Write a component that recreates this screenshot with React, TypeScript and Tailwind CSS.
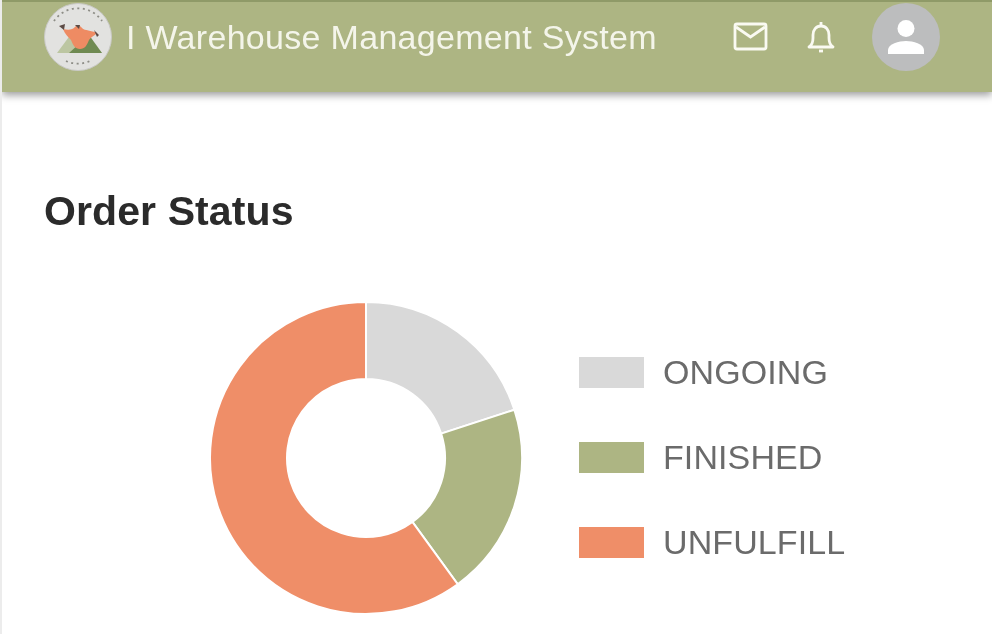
export default function App() {
  const cx = 160, cy = 160, R = 156, r = 79;
  const pt = (a: number, rad: number) => {
    const t = (a * Math.PI) / 180;
    return `${(cx + rad * Math.sin(t)).toFixed(2)} ${(cy - rad * Math.cos(t)).toFixed(2)}`;
  };
  const seg = (a: number, b: number) => {
    const large = b - a > 180 ? 1 : 0;
    return `M${pt(a, R)}A${R} ${R} 0 ${large} 1 ${pt(b, R)}L${pt(b, r)}A${r} ${r} 0 ${large} 0 ${pt(a, r)}Z`;
  };
  const legend = [
    { label: "ONGOING", color: "bg-[#d9d9d9]" },
    { label: "FINISHED", color: "bg-[#adb583]" },
    { label: "UNFULFILL", color: "bg-[#ef8e68]" },
  ];
  return (
    <div className="w-[992px] h-[634px] overflow-hidden bg-white flex flex-col border-l-2 border-l-[#ececec] font-['Liberation_Sans',Arial,sans-serif] blur-[0.5px]">
      <header className="h-[92px] shrink-0 bg-[#adb583] border-t-2 border-t-[#8f9a68] shadow-[0_3px_8px_rgba(0,0,0,0.4)] flex items-center pl-[42px] pr-[52px] pb-[20px] relative">
        <svg width="68" height="68" viewBox="0 0 68 68" className="shrink-0">
          <circle cx="34" cy="34" r="33.5" fill="#e2e2e0" stroke="#c9c9c6" />
          <path d="M10 18A29 29 0 0 1 58 18" fill="none" stroke="#8d8d86" strokeWidth="1.8" strokeDasharray="2 3.5" />
          <path d="M22 58A29 29 0 0 0 46 58" fill="none" stroke="#8d8d86" strokeWidth="1.8" strokeDasharray="2 3.5" />
          <path d="M13 50 33 23 58 50Z" fill="#bcc6a2" />
          <path d="M25 50 45 32 58 50Z" fill="#6f8a52" />
          <path d="M19 26c5 1 8 1 11-1 2-3 6-3 8 0 3 3 9 2 15 5-3 3-6 4-8 7-2 5-4 9-9 9-5 0-7-4-9-9-3-3-6-6-8-11Z" fill="#ee8b63" />
          <path d="M15 23 21 21 20 27ZM31 22 36 22 35 26ZM50 27 55 32 53 34Z" fill="#5b4a44" />
        </svg>
        <div className="ml-[14px] text-[34px] leading-none text-[#f4f5ea] tracking-[0.3px] whitespace-nowrap">I Warehouse Management System</div>
        <svg width="36" height="30" viewBox="0 0 36 30" fill="none" stroke="#fafaf2" strokeWidth="2.8" className="ml-auto shrink-0">
          <rect x="2" y="2" width="31" height="25" rx="2" />
          <path d="M3 5 17.5 15 32 5" />
        </svg>
        <svg width="30" height="36" viewBox="0 0 30 36" fill="none" stroke="#fafaf2" strokeWidth="2.8" className="ml-[37px] shrink-0">
          <path d="M3 28c3-2 4-4 4-9v-3c0-5 3-9 8-9s8 4 8 9v3c0 5 1 7 4 9Z" strokeLinejoin="round" />
          <path d="M15 3v3" />
          <path d="M13 32h4" />
        </svg>
        <div className="ml-[36px] w-[68px] h-[68px] rounded-full bg-[#bcbdbe] flex items-center justify-center shrink-0">
          <svg width="38" height="36" viewBox="0 0 38 36" fill="#ffffff">
            <circle cx="19" cy="9.5" r="8.5" />
            <path d="M1 35v-4c0-6 11-9 18-9s18 3 18 9v4Z" />
          </svg>
        </div>
      </header>
      <main className="flex-1 pl-[42px] pt-[95px]">
        <h1 className="text-[41px] leading-[48px] font-bold text-[#2b2b2b] tracking-[0.1px]">Order Status</h1>
        <div className="flex items-center mt-[63px] ml-[162px]">
          <svg width="320" height="320" viewBox="0 0 320 320" className="shrink-0">
            <path d={seg(0, 72)} fill="#d9d9d9" stroke="#ffffff" strokeWidth="2" />
            <path d={seg(72, 144)} fill="#adb583" stroke="#ffffff" strokeWidth="2" />
            <path d={seg(144, 360)} fill="#ef8e68" stroke="#ffffff" strokeWidth="2" />
          </svg>
          <ul className="ml-[53px] flex flex-col gap-[51px] mb-[2px]">
            {legend.map((l) => (
              <li key={l.label} className="flex items-center h-[34px]">
                <span className={`w-[65px] h-[31px] ${l.color}`} />
                <span className="ml-[19px] text-[34px] leading-none text-[#6b6b6b] tracking-[0.1px]">{l.label}</span>
              </li>
            ))}
          </ul>
        </div>
      </main>
    </div>
  );
}
